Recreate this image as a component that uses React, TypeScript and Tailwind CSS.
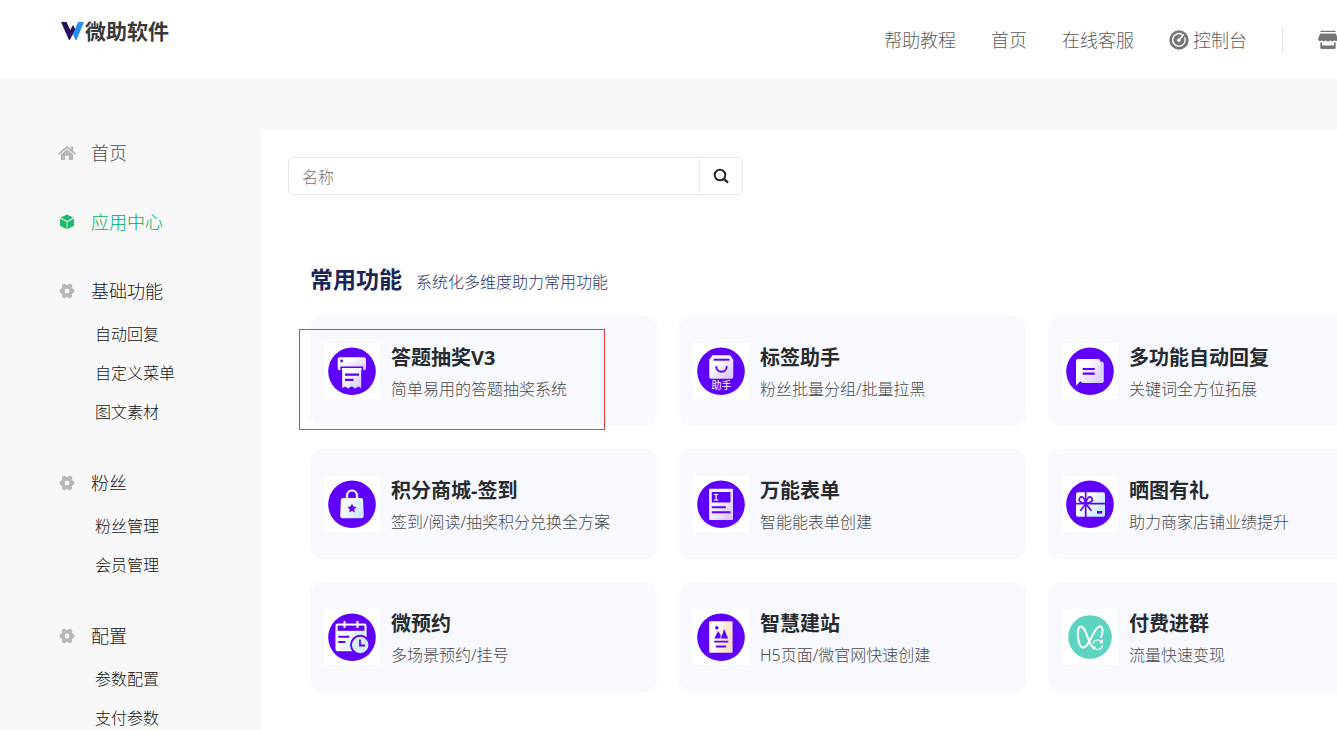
import type { ReactNode } from 'react';

const Disc = ({ children }: { children: ReactNode }) => (
  <svg viewBox="0 0 56 56" className="size-14 shrink-0 bg-white" aria-hidden="true">
    <defs>
      <linearGradient id="lilac" x1="0" y1="0" x2="1" y2="1">
        <stop offset="0.3" stopColor="#ffffff" />
        <stop offset="1" stopColor="#d3c2fb" />
      </linearGradient>
      <linearGradient id="ice" x1="0" y1="0" x2="1" y2="0.6">
        <stop offset="0.3" stopColor="#ffffff" />
        <stop offset="1" stopColor="#c9e8fb" />
      </linearGradient>
      <linearGradient id="cream" x1="0" y1="0" x2="1" y2="0.3">
        <stop offset="0.3" stopColor="#ffffff" />
        <stop offset="1" stopColor="#f7ddc2" />
      </linearGradient>
    </defs>
    <circle cx="28" cy="28.3" r="23.8" fill="#5f00ff" />
    {children}
  </svg>
);

const PrinterIcon = () => (
  <Disc>
    <rect x="13.7" y="14.3" width="28.3" height="13" rx="2" fill="url(#lilac)" />
    <circle cx="17.6" cy="18" r="1.4" fill="#5f00ff" />
    <path d="M17.2 28V24.2h21.2V28" fill="none" stroke="#5f00ff" strokeWidth="1.6" />
    <path d="M18.2 25h19v20.3l-2.7-1.8-3.2 2-3.6-2.2-3.6 2.2-3.2-2-2.7 1.8z" fill="url(#lilac)" />
    <path d="M21 31.7h14M21 36.8h8.5" stroke="#5f00ff" strokeWidth="2.2" />
  </Disc>
);

const BagIcon = () => (
  <Disc>
    <path d="M19.5 12.3h17.6l3.2 4.5v17a2 2 0 0 1-2 2h-20a2 2 0 0 1-2-2v-17z" fill="url(#lilac)" />
    <path d="M20.5 16.7h16" stroke="#5f00ff" strokeWidth="2" />
    <path d="M23.3 24c.2 6.4 10 6.4 10.400 0" fill="none" stroke="#5f00ff" strokeWidth="2" strokeLinecap="round" />
    <text x="28.500" y="46" fontSize="10" textAnchor="middle" fill="#ffffff">助手</text>
  </Disc>
);

const ChatIcon = () => (
  <Disc>
    <path d="M36 18.500h3.500q2.300 0 2.300 2.300V38q0 2-2 2H24V20z" fill="#dccffc" />
    <path d="M15.800 16h20.400q2 0 2 2v20.500q0 1.500-1.600 1.500H20.500l-2.200-1.800-4.300 4.600V18q0-2 1.800-2z" fill="url(#lilac)" />
    <path d="M20.700 26h12M20.700 30.600h12" stroke="#5f00ff" strokeWidth="2.100" />
  </Disc>
);

const LockIcon = () => (
  <Disc>
    <path d="M23 24v-4.500a5 5 0 0 1 10 0V24" fill="none" stroke="#ffffff" strokeWidth="2.200" />
    <path d="M19 22h18q2 0 2.100 2l.7 15.500q0 2.700-2.700 2.700H18.900q-2.700 0-2.700-2.700L16.900 24q.1-2 2.100-2z" fill="url(#ice)" />
    <path d="M28 27.600l1.400 3 3.200.4-2.400 2.200.7 3.300-2.900-1.700-2.900 1.700.7-3.300-2.400-2.200 3.200-.4z" fill="#5f00ff" />
  </Disc>
);

const FormIcon = () => (
  <Disc>
    <rect x="16.200" y="12.700" width="23.800" height="31.300" rx="1" fill="url(#lilac)" />
    <rect x="18.700" y="16" width="18.800" height="10.500" fill="#5f00ff" />
    <path d="M20.800 18.500h4.600M20.800 24h4.600M23.100 18.500V24" stroke="#ffffff" strokeWidth="1.200" />
    <path d="M18.700 31.300h14.100M18.700 36.200h18.800" stroke="#5f00ff" strokeWidth="2" />
  </Disc>
);

const GiftIcon = () => (
  <Disc>
    <rect x="14" y="16.300" width="29" height="24.400" rx="2" fill="url(#ice)" />
    <path d="M23.700 16v25M14 27.600h29" stroke="#5f00ff" strokeWidth="1.700" />
    <path d="M23.700 27.500c-6-.8-7.500-3.200-5.900-5.600 2-2.600 5 0 5.900 5.600 1-5.600 4-8.200 6-5.600 1.600 2.400 0 4.800-6 5.600zM23.500 28l-4.700 6.200M24 28l5 6.200" fill="none" stroke="#5f00ff" strokeWidth="1.700" strokeLinecap="round" />
    <rect x="35" y="35" width="5.200" height="2.600" fill="#5f00ff" />
  </Disc>
);

const CalendarIcon = () => (
  <Disc>
    <rect x="12.200" y="15.200" width="29.600" height="26.400" rx="1.500" fill="url(#ice)" stroke="#ffffff" strokeWidth="1.500" />
    <rect x="13.600" y="16.600" width="26.800" height="5.200" fill="#5f00ff" />
    <path d="M20.500 12v7M33.500 12v7" stroke="#ffffff" strokeWidth="2" />
    <path d="M14.300 27.700h11M14.300 33h7" stroke="#5f00ff" strokeWidth="1.900" />
    <circle cx="36.200" cy="36" r="9.200" fill="#d4edfd" stroke="#5f00ff" strokeWidth="1.900" />
    <path d="M36 30.500V36.500h5" fill="none" stroke="#5f00ff" strokeWidth="1.800" />
  </Disc>
);

const PageIcon = () => (
  <Disc>
    <rect x="16.200" y="12.300" width="23.400" height="31.400" rx="1" fill="url(#cream)" />
    <circle cx="23.800" cy="18.800" r="1.700" fill="#5f00ff" />
    <path d="M21.300 29.500l3.900-7.500 3 5.200L31 20l4.200 9.500z" fill="#5f00ff" />
    <path d="M27.300 29.500l2.600-7" stroke="#ffffff" strokeWidth=".8" />
    <path d="M21.300 32.600h14M23 37.500h10" stroke="#5f00ff" strokeWidth="1.900" />
  </Disc>
);

const GroupIcon = () => (
  <svg viewBox="0 0 56 56" className="size-14 shrink-0 bg-white" aria-hidden="true">
    <circle cx="28" cy="28" r="21.800" fill="#5dd4bf" />
    <path d="M30.500 37.500C26.500 36.500 24.800 17.800 18.600 17.600c-5 .3-2.700 20.900 2.500 21 6.500-.2 10.300-19.800 16.300-21 4-.3 3.800 5.200 1.800 10.200" fill="none" stroke="#ffffff" strokeWidth="2" strokeLinecap="round" />
    <path d="M31 34.800a4.900 4.900 0 0 1 9-1.500M40.500 36.500a4.900 4.900 0 0 1-9 1.700M40.400 30.800v2.800h-2.600M31.200 40.800V38h2.600" fill="none" stroke="#ffffff" strokeWidth="1.200" />
  </svg>
);

const Logo = () => (
  <svg viewBox="0 0 23 18" className="h-[18px] w-[23px]" aria-hidden="true">
    <path d="M0 0h5.500l3.700 8L12 3l2.500 4.500L8.800 18H8z" fill="#2b0f5e" />
    <path d="M17 0h6l-7.500 18h-1L12 12.500z" fill="#2590f2" />
  </svg>
);

const GaugeIcon = () => (
  <svg viewBox="0 0 20 20" className="size-5" aria-hidden="true">
    <circle cx="10" cy="10" r="9.700" fill="#757575" />
    <path d="M13.300 4.600A6.300 6.300 0 1 0 15.600 7.200" fill="none" stroke="#ffffff" strokeWidth="1.400" />
    <path d="M10 10.200l4.300-5.400" stroke="#ffffff" strokeWidth="1.400" strokeLinecap="round" />
    <circle cx="9.800" cy="10.300" r="1.700" fill="#ffffff" />
  </svg>
);

const ShopIcon = () => (
  <svg viewBox="0 0 20 20" className="size-5" fill="#757575" aria-hidden="true">
    <path d="M2.500 .8h15v1.200h-15zM2.200 3.600h15.600L20 9a2.200 2.200 0 0 1-3.800 1.300 2.400 2.400 0 0 1-4.100 0 2.400 2.400 0 0 1-4.200 0 2.400 2.400 0 0 1-4.100 0A2.200 2.200 0 0 1 0 9z" />
    <path d="M2.300 12.400h1.800v3.200h11.800v-3.200h1.800v5.100q0 1.500-1.500 1.500H3.800q-1.500 0-1.500-1.500z" />
  </svg>
);

const HomeIcon = () => (
  <svg viewBox="0 0 18 16" className="h-4 w-[18px]" fill="#b8b8b8" aria-hidden="true">
    <path d="M9 .8l3.800 3.300V1.600h2.400v4.500l2.700 2.300-1.200 1.400L9 3.300 1.300 9.800.1 8.400z" />
    <path d="M9 4.300l6.200 5.200V15h-4.500v-4.200H7.300V15H2.800V9.500z" />
  </svg>
);

const CubeIcon = () => (
  <svg viewBox="0 0 16 16" className="size-4" fill="#1dba6b" aria-hidden="true">
    <path d="M8 .6l6.200 3L8 6.900 1.800 3.600zM1 4.600l6.600 3.500v7.200L1 11.700zM15 4.600L8.400 8.100v7.200l6.600-3.600z" />
  </svg>
);

const GearIcon = () => (
  <svg viewBox="0 0 16 16" className="size-4" aria-hidden="true">
    <g fill="#b8b8b8">
      <circle cx="8" cy="8" r="6.100" />
      <circle cx="2.700" cy="8" r="2.300" />
      <circle cx="13.300" cy="8" r="2.300" />
      <circle cx="5.200" cy="3.200" r="2.400" />
      <circle cx="10.800" cy="3.200" r="2.400" />
      <circle cx="5.200" cy="12.800" r="2.400" />
      <circle cx="10.800" cy="12.800" r="2.400" />
    </g>
    <circle cx="8" cy="8" r="2.400" fill="#f8f8f8" />
  </svg>
);

const menu = [
  { label: '首页', icon: <HomeIcon />, tone: 'text-[#4d4d4d]', items: [] },
  { label: '应用中心', icon: <CubeIcon />, tone: 'text-[#00b058]', items: [] },
  { label: '基础功能', icon: <GearIcon />, tone: 'text-[#14161f]', items: ['自动回复', '自定义菜单', '图文素材'] },
  { label: '粉丝', icon: <GearIcon />, tone: 'text-[#14161f]', items: ['粉丝管理', '会员管理'] },
  { label: '配置', icon: <GearIcon />, tone: 'text-[#14161f]', items: ['参数配置', '支付参数'] },
];

const apps = [
  { title: '答题抽奖V3', text: '简单易用的答题抽奖系统', icon: <PrinterIcon />, marked: true },
  { title: '标签助手', text: '粉丝批量分组/批量拉黑', icon: <BagIcon /> },
  { title: '多功能自动回复', text: '关键词全方位拓展', icon: <ChatIcon /> },
  { title: '积分商城-签到', text: '签到/阅读/抽奖积分兑换全方案', icon: <LockIcon /> },
  { title: '万能表单', text: '智能能表单创建', icon: <FormIcon /> },
  { title: '晒图有礼', text: '助力商家店铺业绩提升', icon: <GiftIcon /> },
  { title: '微预约', text: '多场景预约/挂号', icon: <CalendarIcon /> },
  { title: '智慧建站', text: 'H5页面/微官网快速创建', icon: <PageIcon /> },
  { title: '付费进群', text: '流量快速变现', icon: <GroupIcon /> },
];

export default function App() {
  return (
    <div className="h-screen overflow-hidden bg-[#f8f8f8] font-['Noto_Sans','Noto_Sans_CJK_SC',sans-serif]">
      <div className="min-w-[1444px]">
        <header className="flex h-[79px] items-center justify-between bg-white pr-[106px] pl-[61px]">
          <a href="#" className="mb-[18px] flex items-center gap-px text-[21px] leading-6 font-bold text-[#3a3a3a]">
            <Logo />
            微助软件
          </a>
          <nav className="flex items-center gap-[35px] text-lg leading-7 font-light text-[#5c5c5c]">
            <a href="#">帮助教程</a>
            <a href="#">首页</a>
            <a href="#">在线客服</a>
            <a href="#" className="flex items-center gap-1">
              <GaugeIcon />
              控制台
            </a>
            <span className="h-6 w-px bg-[#e5e5e5]" />
            <a href="#" aria-label="店铺">
              <ShopIcon />
            </a>
          </nav>
        </header>

        <div className="flex">
          <aside className="w-[261px] shrink-0 pt-[60px] pl-[58px] font-light">
            {menu.map((group) => (
              <section key={group.label} className={group.items.length ? 'mb-[37px]' : 'mb-[41px]'}>
                <a href="#" className={`flex items-center gap-[15px] text-lg leading-7 ${group.tone}`}>
                  <span className="flex w-[18px] justify-center">{group.icon}</span>
                  {group.label}
                </a>
                {group.items.length > 0 && (
                  <ul className="mt-[10px] pl-[37px] text-base leading-[39px] text-[#141414]">
                    {group.items.map((item) => (
                      <li key={item}>
                        <a href="#">{item}</a>
                      </li>
                    ))}
                  </ul>
                )}
              </section>
            ))}
          </aside>

          <main className="mt-[51px] grow rounded-tl-md bg-white pt-[27px] pb-10 pl-[27px]">
            <form className="flex h-[38px] w-[455px] rounded-[5px] border border-[#e8e8e8]">
              <input
                type="text"
                aria-label="名称"
                placeholder="名称"
                className="min-w-0 grow px-[13px] pt-0.5 text-base font-light outline-none placeholder:text-[#6e6e6e]"
              />
              <button type="button" aria-label="搜索" className="flex w-[43px] items-center justify-center border-l border-[#e8e8e8]">
                <svg viewBox="0 0 16 16" className="size-4" fill="none" stroke="#2b2b2b" aria-hidden="true">
                  <circle cx="7" cy="7" r="5.300" strokeWidth="2" />
                  <path d="M11 11l4 3.700" strokeWidth="2.400" />
                </svg>
              </button>
            </form>

            <div className="mt-[67px] flex items-baseline gap-[14px] pl-[22px]">
              <h2 className="text-[23px] leading-[34px] font-bold text-[#1b2559]">常用功能</h2>
              <p className="text-base leading-6 font-light text-[#2a3570]">系统化多维度助力常用功能</p>
            </div>

            <div className="mt-5 grid grid-cols-3 gap-x-[22px] gap-y-[23px] pr-[49px] pl-[22px]">
              {apps.map((app) => (
                <a
                  key={app.title}
                  href="#"
                  className="relative flex h-[110px] items-center gap-[11px] rounded-xl bg-[#f8f9ff] px-[14px]"
                >
                  {app.icon}
                  <div className="pt-0.5">
                    <h3 className="text-xl leading-[30px] font-bold text-[#262b30]">{app.title}</h3>
                    <p className="mt-1 text-base leading-6 font-light text-[#4a4a4a]">{app.text}</p>
                  </div>
                  {app.marked && (
                    <span className="absolute top-[13px] -left-[11px] h-[101px] w-[306px] border border-[#f03a3e]" />
                  )}
                </a>
              ))}
            </div>
          </main>
        </div>
      </div>
    </div>
  );
}
